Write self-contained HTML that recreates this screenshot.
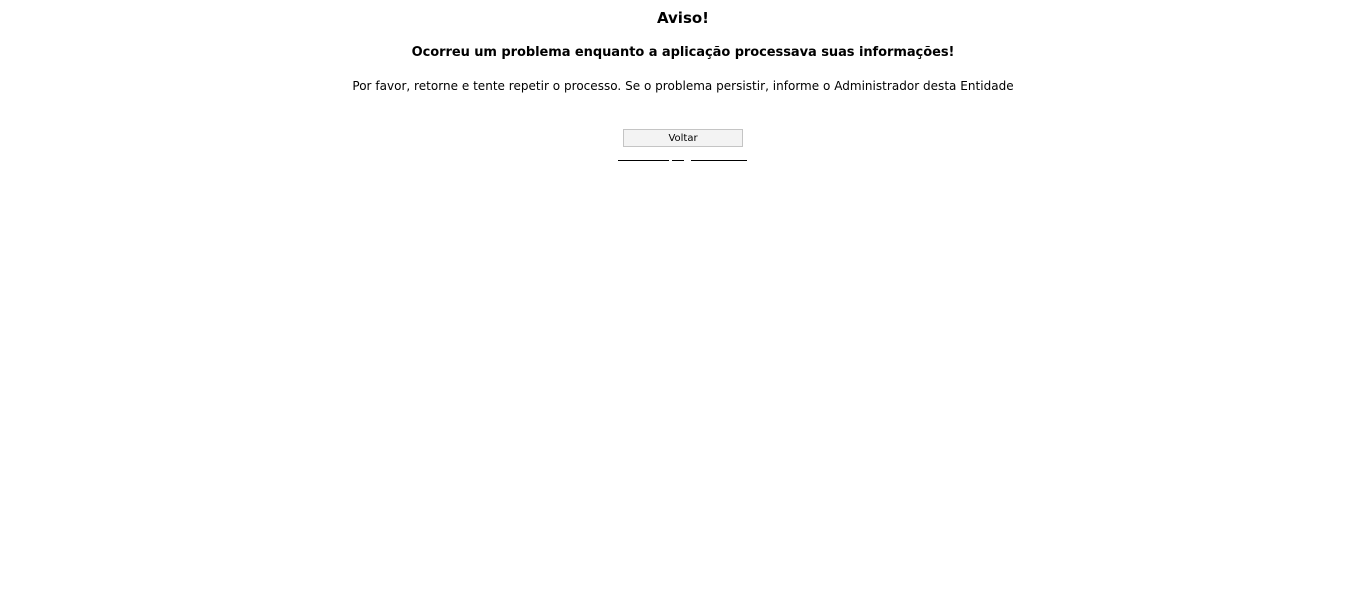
<!DOCTYPE html>
<html><head><meta charset="utf-8"><style>
body{margin:0;background:#fff;font-family:"DejaVu Sans",Verdana,sans-serif;color:#000;width:1366px;height:607px;overflow:hidden}
.t{position:absolute;left:0;width:1366px;text-align:center;white-space:nowrap}
.btn{position:absolute;left:623px;top:129px;width:118px;height:16px;border:1px solid #c4c4c4;background:#f3f3f3;font-size:10px;text-align:center;line-height:18px}
.u{position:absolute;top:160px;height:1px;background:#000}
</style></head><body>
<div class="t" style="top:9px;font-size:15px;font-weight:bold">Aviso!</div>
<div class="t" style="top:45px;font-size:13px;font-weight:bold;letter-spacing:-0.06px">Ocorreu um problema enquanto a aplicação processava suas informações!</div>
<div class="t" style="top:79px;font-size:12px;letter-spacing:0.02px">Por favor, retorne e tente repetir o processo. Se o problema persistir, informe o Administrador desta Entidade</div>
<div class="btn">Voltar</div>
<div class="u" style="left:618px;width:51px"></div>
<div class="u" style="left:672px;width:12px"></div>
<div class="u" style="left:691px;width:56px"></div>
</body></html>
